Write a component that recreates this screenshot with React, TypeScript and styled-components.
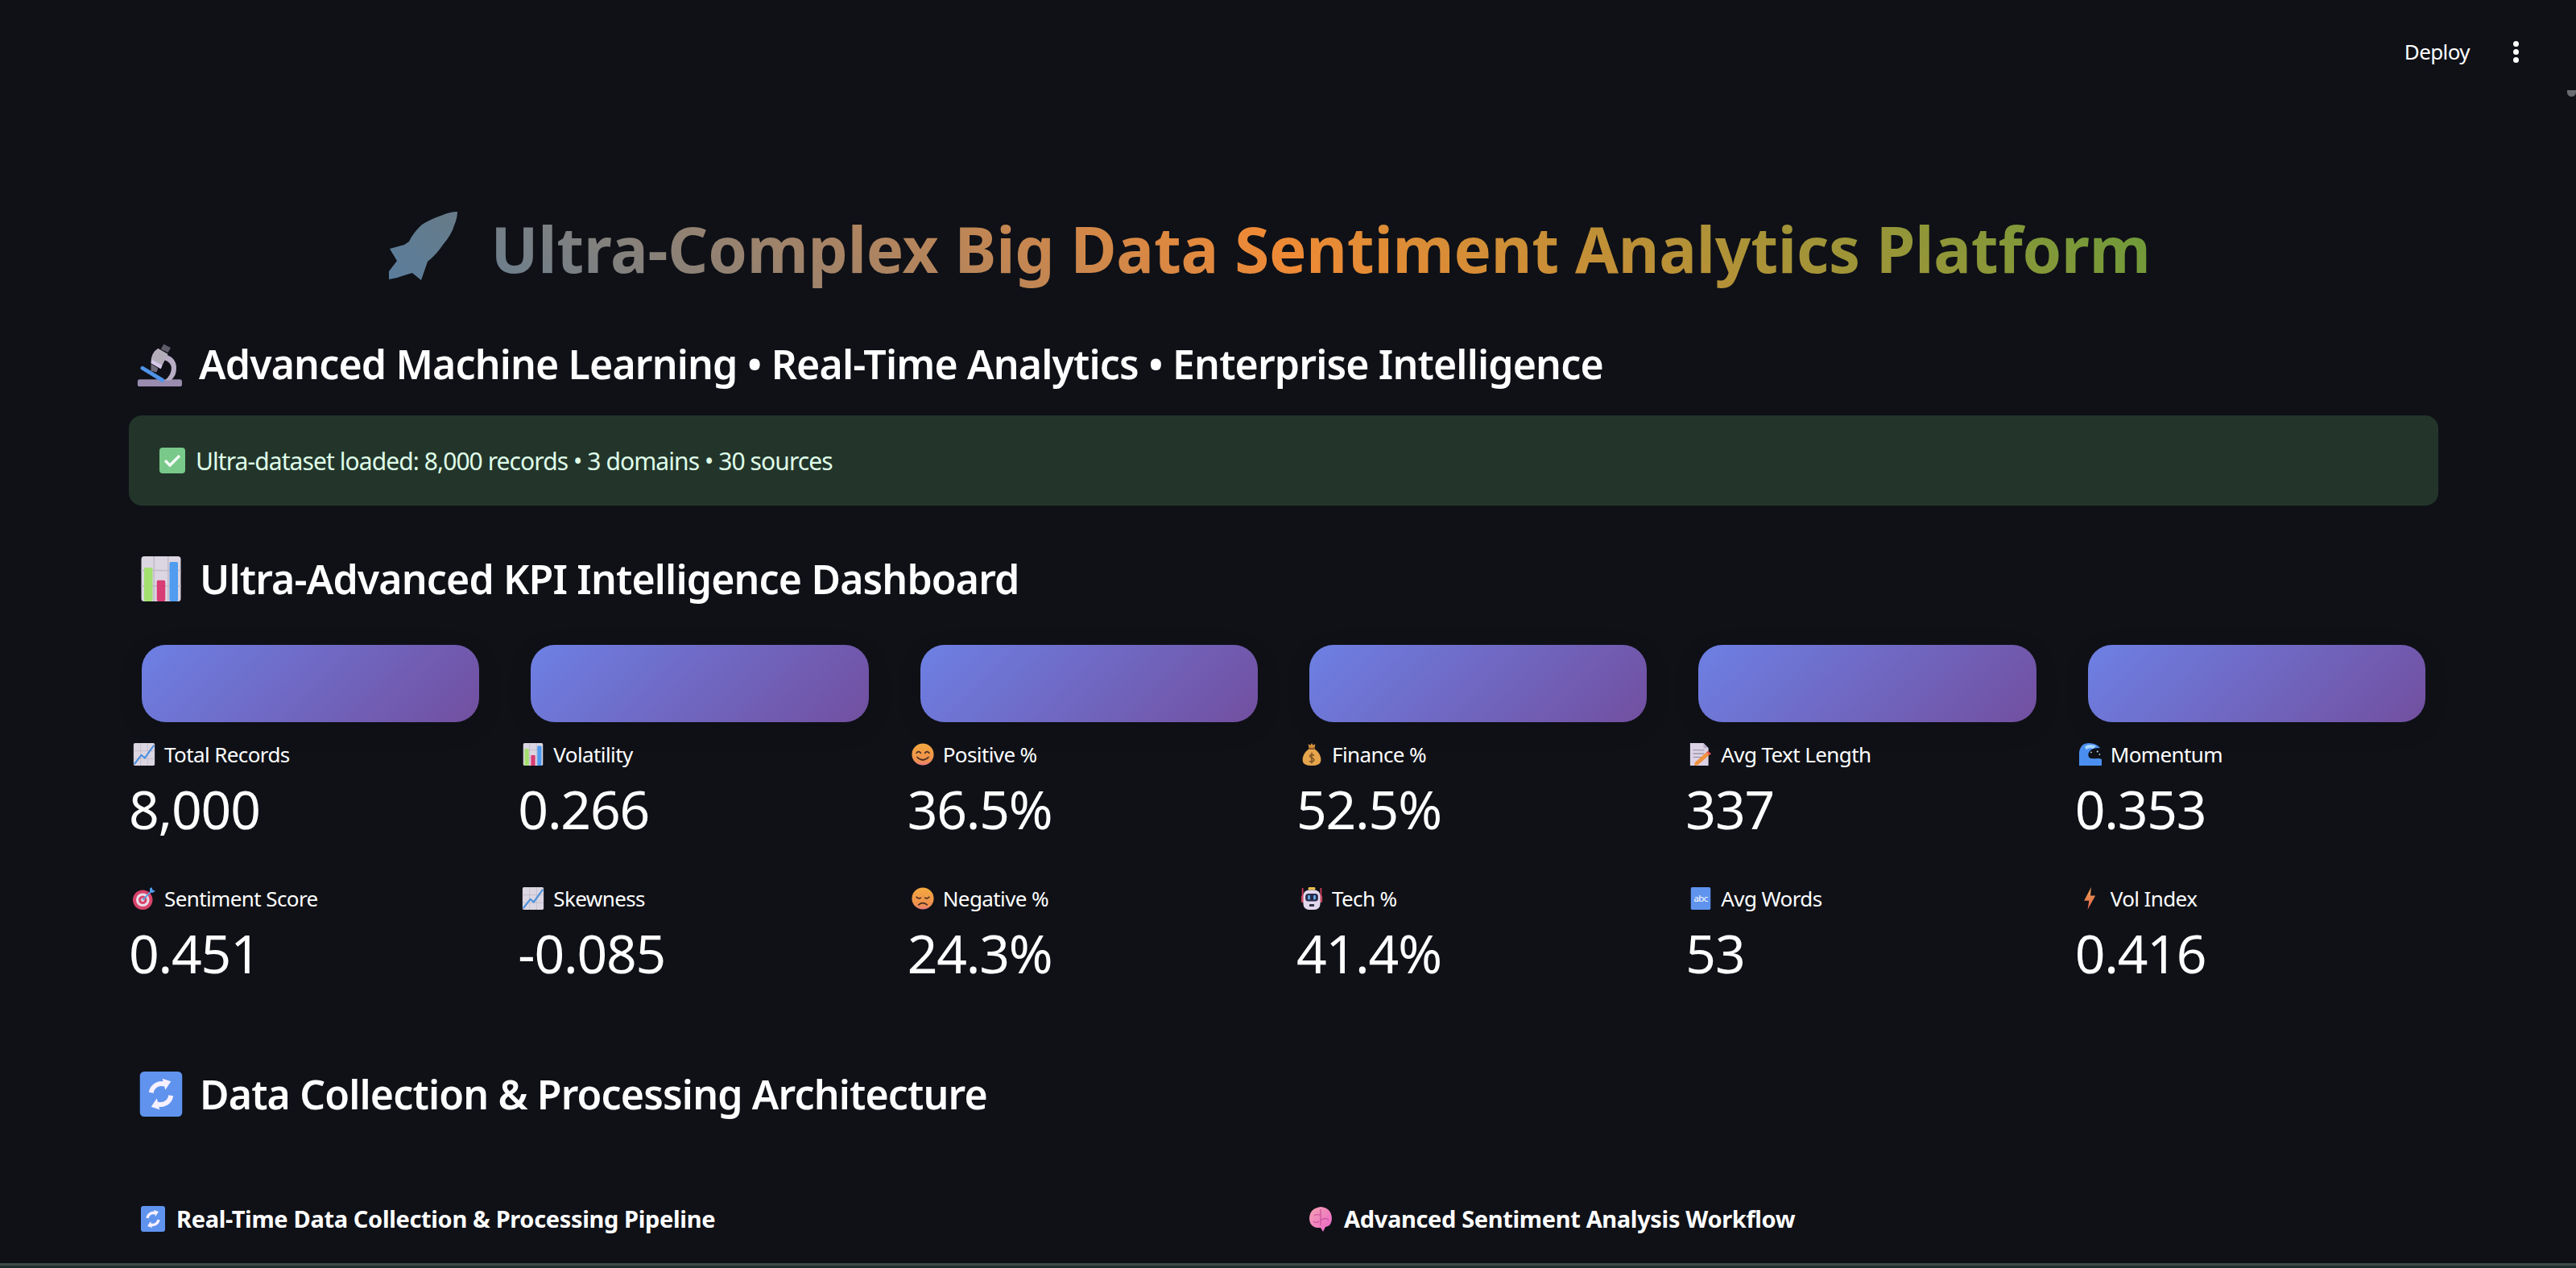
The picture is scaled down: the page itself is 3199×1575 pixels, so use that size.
import React from "react";
import styled, { createGlobalStyle } from "styled-components";

const Global = createGlobalStyle`
  html, body { margin: 0; padding: 0; background: #0f1117; height: 100%; overflow: hidden; }
  #root { height: 100%; }
`;

const FONT = `"Noto Sans", "Open Sans", "Liberation Sans", sans-serif`;

const Page = styled.div`
  position: relative;
  width: 3199px;
  height: 1575px;
  overflow: hidden;
  box-sizing: border-box;
  padding: 0 171px 0 160px;
  background: #0f1117;
  color: #fff;
  font-family: ${FONT};
`;

const TopBar = styled.header`
  display: flex;
  justify-content: flex-end;
  align-items: center;
  gap: 54px;
  height: 128px;
  margin-right: -100px;
`;

const Deploy = styled.span`
  font-size: 26px;
  line-height: 1;
  letter-spacing: -0.6px;
`;

const Dots = styled.span`
  display: flex;
  flex-direction: column;
  gap: 3px;
  width: 7px;
  & > i { display: block; width: 7px; height: 7px; border-radius: 50%; background: #fff; }
`;

const Thumb = styled.div`
  position: absolute;
  right: 0;
  top: 112px;
  width: 11px;
  height: 8px;
  background: #6a6b70;
  border-radius: 0 0 6px 6px;
`;

const Title = styled.h1`
  display: flex;
  justify-content: center;
  align-items: flex-end;
  gap: 41px;
  margin: 128px 0 0;
  padding-right: 34px;
  height: 106px;
  font-size: 78px;
  font-weight: 700;
  line-height: 106px;
  letter-spacing: -0.2px;
  background: linear-gradient(45deg, #2f79b5, #ef8a35, #41a03b);
  -webkit-background-clip: text;
  background-clip: text;
  color: transparent;
  white-space: nowrap;
`;

const Sub = styled.h2`
  display: flex;
  align-items: center;
  gap: 21px;
  margin: 54px 0 0 10px;
  font-size: 50px;
  font-weight: 600;
  line-height: 72px;
  letter-spacing: -0.85px;
  white-space: nowrap;
`;

const Banner = styled.div`
  display: flex;
  align-items: center;
  gap: 13px;
  height: 112px;
  margin-top: 28px;
  padding-left: 38px;
  box-sizing: border-box;
  border-radius: 16px;
  background: #23352a;
  color: #dffde9;
  font-size: 30px;
  letter-spacing: -0.92px;
`;

const Heading = styled.h2<{ $top: number }>`
  display: flex;
  align-items: center;
  gap: 20px;
  margin: ${(p) => p.$top}px 0 0 12px;
  font-size: 50px;
  font-weight: 600;
  line-height: 72px;
  letter-spacing: -0.85px;
  white-space: nowrap;
`;

const Cards = styled.div`
  display: grid;
  grid-template-columns: repeat(6, 1fr);
  column-gap: 32px;
  margin-top: 46px;
`;

const Card = styled.div`
  height: 96px;
  margin: 0 16px;
  border-radius: 30px;
  background: linear-gradient(135deg, #6d80e4 0%, #724f9f 100%);
  box-shadow: 0 8px 32px rgba(0, 0, 0, 0.1);
`;

const Metrics = styled.div`
  display: grid;
  grid-template-columns: repeat(6, 1fr);
  column-gap: 32px;
  margin-top: 24px;
`;

const Metric = styled.div`
  height: 179px;
`;

const Label = styled.div`
  display: flex;
  align-items: center;
  gap: 11px;
  height: 32px;
  padding-left: 5px;
  font-size: 26px;
  letter-spacing: -0.6px;
  white-space: nowrap;
`;

const Value = styled.div`
  margin-top: 7px;
  font-size: 66px;
  font-weight: 400;
  line-height: 88px;
  letter-spacing: -1.2px;
  white-space: nowrap;
`;

const Columns = styled.div`
  display: grid;
  grid-template-columns: 1fr 1fr;
  column-gap: 32px;
  margin-top: 99px;
`;

const Sub3 = styled.div`
  display: flex;
  align-items: center;
  gap: 13px;
  padding-left: 14px;
  font-size: 29px;
  font-weight: 700;
  line-height: 40px;
  letter-spacing: -0.35px;
  white-space: nowrap;
`;

const BottomLine = styled.div`
  position: absolute;
  left: 0;
  right: 0;
  bottom: 0;
  height: 3px;
  background: #1f2d2c;
  border-top: 3px solid #404b49;
`;

const Em = ({ s, children }: { s: number; children: React.ReactNode }) => (
  <svg width={s} height={s} viewBox="0 0 32 32" style={{ flex: "none" }}>{children}</svg>
);

const Rocket = () => (
  <svg width="85" height="85" viewBox="0 0 85 85" style={{ flex: "none", marginBottom: 14 }}>
    <defs>
      <linearGradient id="rk" x1="0" y1="1" x2="1" y2="0">
        <stop offset="0" stopColor="#5a7d9c" />
        <stop offset="1" stopColor="#677b88" />
      </linearGradient>
    </defs>
    <path fill="url(#rk)" d="M85 0Q76 0 67 4Q52 9 41 16Q30 26 25 37L19 41L1 46L10 61L0 74L0 84L10 82L19 79L29 76L40 85L48 62Q60 52 67 41Q78 28 81 17Q85 8 85 0Z" />
  </svg>
);

const Bars = ({ s }: { s: number }) => (
  <Em s={s}>
    <rect x="2" y="0" width="28" height="32" rx="2" fill="#dcd6e2" />
    <path d="M2 10H30M2 21H30M11 0V32M21 0V32" stroke="#c3bccb" strokeWidth="1" />
    <rect x="4" y="8" width="6" height="24" rx="1" fill="#a4e06f" />
    <rect x="13" y="17" width="6" height="15" rx="1" fill="#d83c74" />
    <rect x="22" y="4" width="6" height="28" rx="1" fill="#4f9cf0" />
  </Em>
);
const Trend = ({ s }: { s: number }) => (
  <Em s={s}>
    <rect x="1" y="0" width="30" height="32" rx="2" fill="#dcd6e2" />
    <path d="M1 11H31M1 22H31M11 0V32M21 0V32" stroke="#c3bccb" strokeWidth="1" />
    <path d="M2 30L12 17L17 21L30 3" fill="none" stroke="#4a90dc" strokeWidth="2.4" />
  </Em>
);
const Refresh = ({ s }: { s: number }) => (
  <Em s={s}>
    <rect x="1" y="0" width="30" height="32" rx="3" fill="#5f93ee" />
    <path d="M9 15A7.5 7.5 0 0 1 19 9M23 17A7.5 7.5 0 0 1 13 23" fill="none" stroke="#f7f0ff" strokeWidth="3.4" />
    <path d="M17 5L23 7L19 13ZM15 27L9 25L13 19Z" fill="#f7f0ff" />
  </Em>
);
const Micro = ({ s }: { s: number }) => (
  <Em s={s}>
    <rect x="0.5" y="27" width="31.5" height="5" rx="1.5" fill="#9a8cae" />
    <path d="M19 9Q28 11 28 19Q28 25 24 27.5H20Q24.5 24 24.5 19Q24.5 14 17 12.5Z" fill="#b9aec6" />
    <path d="M4 19L18 27.5" stroke="#4f94e8" strokeWidth="2.8" strokeLinecap="round" />
    <path d="M15 5L22 9L17 19L10 15Q10 8 15 5Z" fill="#b3adba" />
    <path d="M10.5 13L18 17L17 19.5L10 15.5Z" fill="#d6c8ea" />
    <path d="M10 16L15 19L14 22L10 21Z" fill="#6f6a7a" />
    <path d="M19 2L24 4.5L22 8L17 5.5Z" fill="#5f5b68" />
  </Em>
);
const Check = ({ s }: { s: number }) => (
  <Em s={s}>
    <rect x="0" y="0" width="32" height="32" rx="4" fill="#78c98a" />
    <path d="M7 16L13 22L25 10" fill="none" stroke="#f3fbf5" strokeWidth="3.4" />
  </Em>
);
const Target = ({ s }: { s: number }) => (
  <Em s={s}>
    <circle cx="14" cy="18" r="14" fill="#d8446a" />
    <circle cx="14" cy="18" r="9.5" fill="#e8dce8" />
    <circle cx="14" cy="18" r="6" fill="#d8446a" />
    <circle cx="14" cy="18" r="2.5" fill="#e8dce8" />
    <path d="M14 18L27 5" stroke="#5a9ee0" strokeWidth="2.2" />
    <path d="M24 2L27 0L28 4L32 5L28 8L24 7Z" fill="#4f9cf0" />
  </Em>
);
const Face = ({ s, sad }: { s: number; sad?: boolean }) => (
  <Em s={s}>
    <defs>
      <linearGradient id={sad ? "fs" : "fh"} x1="0" y1="0" x2="0" y2="1">
        <stop offset="0" stopColor="#f4a93f" />
        <stop offset="0.8" stopColor="#ee8f4e" />
        <stop offset="1" stopColor="#e87a80" />
      </linearGradient>
    </defs>
    <circle cx="16" cy="16" r="15.5" fill={`url(#${sad ? "fs" : "fh"})`} />
    {sad ? (
      <path d="M7 14Q10 17 13 15M25 14Q22 17 19 15M10 25Q16 20 22 25" stroke="#4a2f25" strokeWidth="2" fill="none" strokeLinecap="round" />
    ) : (
      <path d="M7 14Q10 10 13 14M19 14Q22 10 25 14M8 20Q16 28 24 20" stroke="#4a2f25" strokeWidth="2" fill="none" strokeLinecap="round" />
    )}
  </Em>
);
const Bag = ({ s }: { s: number }) => (
  <Em s={s}>
    <path d="M11 1L14 3L16 0L18 3L21 1L20 7H12Z" fill="#d9903a" />
    <path d="M12 8H20Q30 16 29 25Q28 32 16 32Q4 32 3 25Q2 16 12 8Z" fill="#e5a54c" />
    <rect x="11.5" y="6.5" width="9" height="2.5" rx="1" fill="#8b5b2c" />
    <path d="M19.5 17.5Q16 15.5 13.5 17.5Q12.5 20 16 21Q20 22 19 25Q16 27.5 12.5 25.5M16 13.5V29" fill="none" stroke="#7a4f24" strokeWidth="1.7" />
  </Em>
);
const Pagef = ({ s }: { s: number }) => (
  <Em s={s}>
    <path d="M1 0H20L27 7V32H1Z" fill="#dcd2e6" />
    <path d="M20 0L27 7H20Z" fill="#b9aec8" />
    <path d="M5 10H21M5 15H21M5 20H17" stroke="#8f8a9c" strokeWidth="1.3" />
    <path d="M8 27L24 13L28 17L12 31L7 32Z" fill="#ef9340" />
    <path d="M24 13L26 11L31 15L28 17Z" fill="#e2564f" />
  </Em>
);
const Robot = ({ s }: { s: number }) => (
  <Em s={s}>
    <path d="M3 1V20M29 1V20" stroke="#d13c5c" strokeWidth="2" />
    <rect x="11" y="0" width="10" height="4" rx="1.5" fill="#e9bf4b" />
    <rect x="1" y="11" width="30" height="11" rx="3" fill="#c4485f" />
    <rect x="4" y="4" width="24" height="28" rx="8" fill="#e2d8ee" />
    <rect x="7" y="9" width="18" height="11" rx="4" fill="#272b4a" />
    <rect x="10.5" y="11.5" width="3" height="6" rx="1" fill="#69b7f5" />
    <rect x="18.5" y="11.5" width="3" height="6" rx="1" fill="#69b7f5" />
    <rect x="12.5" y="24" width="7" height="3.5" rx="1" fill="#2f2f3f" />
  </Em>
);
const Abc = ({ s }: { s: number }) => (
  <Em s={s}>
    <rect x="2" y="0" width="28" height="32" rx="2" fill="#5f93ee" />
    <text x="16" y="21" textAnchor="middle" fontSize="13" fill="#fff" fontFamily={`"Noto Sans", sans-serif`}>abc</text>
  </Em>
);
const Wave = ({ s }: { s: number }) => (
  <Em s={s}>
    <path d="M0 32V13Q2 0 14 0Q24 0 30 7Q16 6 13 15Q12 23 22 22Q29 21 32 23V32Z" fill="#4a8ff0" />
    <path d="M8 5Q14 0 24 4L20 8Q14 6 10 9Z" fill="#a9d8fb" />
    <circle cx="26" cy="12" r="1.2" fill="#cfe8fb" />
    <circle cx="29" cy="16" r="1" fill="#cfe8fb" />
    <circle cx="17" cy="13" r="1" fill="#cfe8fb" />
  </Em>
);
const Bolt = ({ s }: { s: number }) => (
  <Em s={s}>
    <defs>
      <linearGradient id="bolt" x1="0" y1="0" x2="0" y2="1">
        <stop offset="0" stopColor="#eea24f" />
        <stop offset="1" stopColor="#e0604d" />
      </linearGradient>
    </defs>
    <path d="M17 0L7 19H14L12 32L23 12H16Z" fill="url(#bolt)" />
  </Em>
);
const Brain = ({ s }: { s: number }) => (
  <Em s={s}>
    <defs>
      <linearGradient id="brain" x1="0" y1="0" x2="1" y2="1">
        <stop offset="0" stopColor="#f3a3b0" />
        <stop offset="1" stopColor="#ec63c8" />
      </linearGradient>
    </defs>
    <path d="M16 1Q29 2 30 15Q30 25 22 26L19 32L16 27Q3 28 2 16Q2 3 16 1Z" fill="url(#brain)" />
    <path d="M16 4V24M8 12Q12 9 16 12M16 18Q21 14 26 17M7 19Q11 22 14 19" stroke="#c94fa0" strokeWidth="1.2" fill="none" />
  </Em>
);

const metrics: [React.ReactNode, string, string][] = [
  [<Trend s={28} />, "Total Records", "8,000"],
  [<Bars s={28} />, "Volatility", "0.266"],
  [<Face s={28} />, "Positive %", "36.5%"],
  [<Bag s={28} />, "Finance %", "52.5%"],
  [<Pagef s={28} />, "Avg Text Length", "337"],
  [<Wave s={28} />, "Momentum", "0.353"],
  [<Target s={28} />, "Sentiment Score", "0.451"],
  [<Trend s={28} />, "Skewness", "-0.085"],
  [<Face s={28} sad />, "Negative %", "24.3%"],
  [<Robot s={28} />, "Tech %", "41.4%"],
  [<Abc s={28} />, "Avg Words", "53"],
  [<Bolt s={28} />, "Vol Index", "0.416"],
];

export default function App() {
  return (
    <Page>
      <Global />
      <TopBar>
        <Deploy>Deploy</Deploy>
        <Dots><i /><i /><i /></Dots>
      </TopBar>
      <Thumb />
      <Title><Rocket />Ultra-Complex Big Data Sentiment Analytics Platform</Title>
      <Sub><Micro s={56} />Advanced Machine Learning • Real-Time Analytics • Enterprise Intelligence</Sub>
      <Banner><Check s={32} />Ultra-dataset loaded: 8,000 records • 3 domains • 30 sources</Banner>
      <Heading $top={55}><Bars s={56} />Ultra-Advanced KPI Intelligence Dashboard</Heading>
      <Cards>{[0, 1, 2, 3, 4, 5].map((i) => <Card key={i} />)}</Cards>
      <Metrics>
        {metrics.map(([icon, label, value]) => (
          <Metric key={label}>
            <Label>{icon}{label}</Label>
            <Value>{value}</Value>
          </Metric>
        ))}
      </Metrics>
      <Heading $top={44}><Refresh s={56} />Data Collection &amp; Processing Architecture</Heading>
      <Columns>
        <Sub3><Refresh s={32} />Real-Time Data Collection &amp; Processing Pipeline</Sub3>
        <Sub3><Brain s={32} />Advanced Sentiment Analysis Workflow</Sub3>
      </Columns>
      <BottomLine />
    </Page>
  );
}
